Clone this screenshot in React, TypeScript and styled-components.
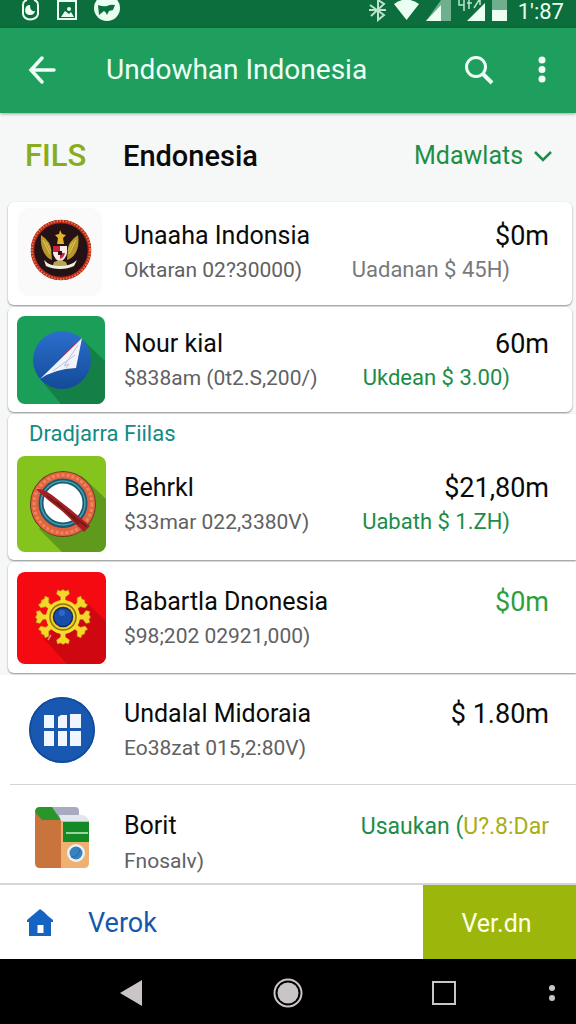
import React from "react";
import styled, { createGlobalStyle, css } from "styled-components";

const GlobalStyle = createGlobalStyle`
  *, *::before, *::after { box-sizing: border-box; }
  body { margin: 0; background: #f6f7f7; font-family: Roboto, "Liberation Sans", sans-serif; color: #0b0b0b; }
  button, select { font: inherit; color: inherit; background: none; border: 0; padding: 0; margin: 0; cursor: pointer; }
  h1, h2, h3, p, ul { margin: 0; padding: 0; font-weight: 400; }
  ul { list-style: none; }
  svg { display: block; flex: none; }
`;

const Screen = styled.div`
  display: flex;
  flex-direction: column;
  min-height: 100vh;
`;

const StatusBar = styled.div`
  display: flex;
  align-items: flex-start;
  justify-content: space-between;
  height: 28px;
  padding: 0 12px 0 20px;
  background: #0b6e3c;
  color: #eafff2;
`;

const StatusGroup = styled.div<{ $gap: number }>`
  display: flex;
  align-items: flex-start;
  gap: ${(p) => p.$gap}px;
`;

const Clock = styled.time`
  margin-left: 4px;
  font-size: 22px;
  line-height: 24px;
`;

const AppBar = styled.header`
  display: flex;
  align-items: center;
  height: 85px;
  padding: 0 16px 2px 24px;
  background: #1f9f5e;
  color: #f0fff6;
  box-shadow: 0 1px 3px rgba(0, 0, 0, 0.35);
`;

const AppTitle = styled.h1`
  flex: 1;
  margin-left: 46px;
  font-size: 28px;
  line-height: 36px;
  white-space: nowrap;
`;

const IconButton = styled.button`
  display: flex;
  align-items: center;
  justify-content: center;
  width: 36px;
  height: 48px;
`;

const BarActions = styled.div`
  display: flex;
  gap: 27px;
`;

const ListHeader = styled.div`
  display: flex;
  align-items: center;
  height: 89px;
  padding: 0 24px 4px 25px;
`;

const Tag = styled.span`
  width: 98px;
  font-size: 31px;
  line-height: 36px;
  font-weight: 500;
  color: #86ad1c;
`;

const Heading = styled.h2`
  flex: 1;
  font-size: 29px;
  line-height: 36px;
  font-weight: 500;
`;

const Picker = styled.label`
  display: flex;
  align-items: center;
  gap: 10px;
  color: #1c8f47;
`;

const PickerSelect = styled.select`
  appearance: none;
  font-size: 25px;
  line-height: 32px;
`;

const List = styled.ul`
  display: flex;
  flex: 1;
  flex-direction: column;
  gap: 2px;
`;

type CardKind = "card" | "edge" | "plain";

const Card = styled.li<{ $kind: CardKind }>`
  background: #fff;
  ${(p) =>
    p.$kind === "plain"
      ? css`
          padding-left: 8px;
          &:last-child {
            flex: 1;
            margin-top: -2px;
          }
        `
      : css`
          margin-left: 8px;
          margin-right: ${p.$kind === "card" ? "4px" : "0"};
          border-radius: ${p.$kind === "card" ? "6px" : "6px 0 0 6px"};
          box-shadow: 0 1px 2px rgba(0, 0, 0, 0.42);
        `}
`;

const GroupLabel = styled.h3`
  padding: 2px 0 2px 21px;
  font-size: 22px;
  line-height: 36px;
  color: #128a86;
`;

const Row = styled.div<{ $height: number; $kind: CardKind; $bottom?: number; $top?: boolean; $divider?: boolean }>`
  display: flex;
  align-items: ${(p) => (p.$top ? "flex-start" : "center")};
  gap: 18px;
  min-height: ${(p) => p.$height}px;
  margin-left: 2px;
  padding-top: ${(p) => (p.$top ? 22 : 0)}px;
  padding-right: ${(p) => (p.$kind === "card" ? 23 : 27)}px;
  padding-bottom: ${(p) => p.$bottom ?? 0}px;
  padding-left: 7px;
  border-bottom: ${(p) => (p.$divider ? "1px solid #d3d5d7" : "0")};
`;

const Details = styled.div`
  flex: 1;
  min-width: 0;
`;

const Line = styled.div<{ $small?: boolean }>`
  display: flex;
  justify-content: space-between;
  align-items: center;
  white-space: nowrap;
  font-size: ${(p) => (p.$small ? 21 : 25)}px;
  line-height: ${(p) => (p.$small ? 32 : 36)}px;
  color: ${(p) => (p.$small ? "#5f6163" : "#0b0b0b")};
  padding-right: ${(p) => (p.$small ? 39 : 0)}px;
`;

const Name = styled.h3`
  font-size: inherit;
`;

const Amount = styled.span<{ $tone?: string }>`
  color: ${(p) => p.$tone ?? "inherit"};
  font-size: 27px;
`;

const Note = styled.span<{ $tone: string; $large?: boolean }>`
  color: ${(p) => p.$tone};
  font-size: ${(p) => (p.$large ? 23 : 22)}px;
`;

const Accent = styled.span`
  color: #a9ae16;
`;

const ActionBar = styled.footer`
  display: flex;
  height: 76px;
  background: #fff;
  border-top: 2px solid #d5d6d8;
`;

const HomeAction = styled.button`
  display: flex;
  flex: 1;
  align-items: center;
  gap: 34px;
  padding: 2px 0 0 26px;
  font-size: 27px;
  color: #1259ae;
`;

const PrimaryAction = styled.button`
  width: 153px;
  padding: 2px 6px 0 0;
  font-size: 25px;
  background: #9db60b;
  color: #fbffe6;
`;

const SystemNav = styled.nav`
  display: grid;
  grid-template-columns: 1fr 27% 27% 27% 1fr;
  align-items: center;
  justify-items: center;
  height: 65px;
  padding-top: 2px;
  background: #000;
  color: #c9c5c6;
`;

const NavButton = styled.button<{ $column: number }>`
  grid-column: ${(p) => p.$column};
  grid-row: 1;
  display: flex;
  padding: 8px;
`;

const NavMenuButton = styled(NavButton)`
  justify-self: end;
  margin-right: 12px;
`;

const Garuda = () => (
  <svg width="89" height="88" viewBox="0 0 89 88" aria-hidden="true">
    <rect x="1" width="84" height="88" rx="12" fill="#fafafa" />
    <circle cx="44" cy="42" r="30" fill="#241214" />
    <circle cx="44" cy="42" r="28.500" fill="none" stroke="#b52a1e" strokeWidth="3.500" />
    <circle cx="44" cy="42" r="29" fill="none" stroke="#f0743c" strokeWidth="2" strokeDasharray="1.500 1.500" />
    <path d="M24 27c4 3 9 7 10 13l1 12c-8-3-12-13-11-25zM61 27c-4 3-9 7-10 13l-1 12c9-3 13-13 11-25z" fill="#b5982c" />
    <path d="M26 32l7 14M29 34l5 9M59 32l-7 14M56 34l-5 9" stroke="#e0c85c" strokeWidth="1" />
    <path d="M43 22l2 4 4 1-3 3 1 6h-7l1-6-3-3 4-1z" fill="#e2b32d" />
    <path d="M36 38h14v7q-1 6-7 9-6-3-7-9z" fill="#f8e9e9" />
    <path d="M36 38h7v6h-7zM43 45h5q-1 5-5 6z" fill="#c9253a" />
    <path d="M41 43h4v4h-4z" fill="#301016" />
    <path d="M37 54l6-2 6 2 2 6H35z" fill="#b8a553" />
    <path d="M27 52q5 6 16 6t17-6l-3 6q-6 3-14 3t-14-3z" fill="#f0efe2" />
  </svg>
);

const Compass = () => (
  <svg width="89" height="88" viewBox="0 0 89 88" aria-hidden="true">
    <defs>
      <linearGradient id="sea" x2="0" y2="1">
        <stop offset="0" stopColor="#2b6fcd" />
        <stop offset="1" stopColor="#144a98" />
      </linearGradient>
    </defs>
    <rect width="88" height="88" rx="8" fill="#1b9f58" />
    <path d="M65 23l23 22v35a8 8 0 0 1-8 8H44L23 63z" fill="#148048" />
    <circle cx="45" cy="44" r="29" fill="url(#sea)" />
    <path d="M65 22L23 63q14-10 36-11z" fill="#f2f4fa" />
    <path d="M65 22L51 34l-8 9z" fill="#cf2742" />
    <path d="M61 29L47 50l5-2-3 4M58 39L36 55" fill="none" stroke="#b9c3d8" strokeWidth="1" />
  </svg>
);

const Porthole = () => (
  <svg width="89" height="96" viewBox="0 0 89 96" aria-hidden="true">
    <rect width="89" height="96" rx="8" fill="#84c41c" />
    <path d="M68 23l21 20v45a8 8 0 0 1-8 8H45L22 73z" fill="#609a1d" />
    <circle cx="46" cy="48" r="33" fill="#6b3a2a" />
    <circle cx="46" cy="48" r="28" fill="none" stroke="#e0643f" strokeWidth="8" />
    <circle cx="46" cy="48" r="29" fill="none" stroke="#ee8560" strokeWidth="3" strokeDasharray="3 2" />
    <circle cx="46" cy="47" r="22" fill="#fff" stroke="#155c73" strokeWidth="5" />
    <circle cx="46" cy="47" r="22" fill="none" stroke="#4b9caf" strokeWidth="1.500" />
    <path d="M19 33q7-1 16 6l18 14 20 17-6 6-22-21-14-11z" fill="#a51e22" />
    <path d="M30 40l40 31M40 46l22 22" stroke="#6a191b" strokeWidth="1.500" />
  </svg>
);

const SunGear = () => (
  <svg width="89" height="92" viewBox="0 0 89 92" aria-hidden="true">
    <rect width="89" height="92" rx="8" fill="#f50a12" />
    <path d="M67 28l22 21v35a8 8 0 0 1-8 8H50L26 66z" fill="#cf0710" />
    <g transform="translate(46 45)">
      {[0, 52, 90, 128, 180, 232, 270, 308].map((angle) => (
        <path
          key={angle}
          d="M-2.500-15v-5l-4-3 1-4 3 1 2.500-1.500 2.500 1.500 3-1 1 4-4 3v5z"
          fill="#f5d72c"
          stroke="#b8860f"
          strokeWidth=".5"
          transform={`rotate(${angle})`}
        />
      ))}
      <circle r="17" fill="#f7dc2b" />
      <circle r="13" fill="#f2cf22" stroke="#8f6f1c" strokeWidth="1.500" />
      <circle r="9.500" fill="#184cab" stroke="#172c55" strokeWidth="1.500" />
      <circle cx="-1" cy="-4" r="3" fill="#2f67c8" />
    </g>
    <path d="M31 68l3-5" stroke="#ff8370" strokeWidth="1.500" />
  </svg>
);

const GridBadge = () => (
  <svg width="89" height="70" viewBox="0 0 89 70" aria-hidden="true">
    <circle cx="45" cy="35" r="33" fill="#1858b1" />
    <circle cx="45" cy="35" r="32" fill="none" stroke="#104a9d" strokeWidth="1.500" />
    <path d="M27 20h10v13H27zM41 22l3-2h6v13h-9zM53 19h11v14H53zM27 36h10v15H27zM41 36h9v15h-9zM53 36h11v15H53z" fill="#f0f6ff" />
  </svg>
);

const Carton = () => (
  <svg width="89" height="62" viewBox="0 -4 89 62" aria-hidden="true">
    <path d="M21-4h37q4 0 4 4v9l-19 2z" fill="#a8abc0" />
    <path d="M18 1l26 8v48H23q-5 0-5-5z" fill="#c9743c" />
    <path d="M18 1q0-5 5-5h12l9 13H25z" fill="#28962b" />
    <path d="M44 9h28v43q0 5-5 5H44z" fill="#eeb171" />
    <path d="M42 4h24q5 2 6 6H44z" fill="#e3e6ed" />
    <path d="M46 11h26v20H46z" fill="#138a25" />
    <path d="M49 22h22" stroke="#c8efc4" strokeWidth="1.500" />
    <circle cx="59" cy="42" r="9" fill="#edf2f6" />
    <circle cx="59" cy="42" r="6.500" fill="#3a82bd" />
    <path d="M54 46q7 1 9-8" fill="none" stroke="#2868a2" strokeWidth="1" />
  </svg>
);

interface Entry {
  icon: React.ReactNode;
  name: string;
  detail: string;
  amount: React.ReactNode;
  tone?: string;
  note?: string;
  noteTone?: string;
  height: number;
  bottom?: number;
  kind: CardKind;
  group?: string;
  top?: boolean;
  divider?: boolean;
}

const GREEN = "#1b8d49";

const entries: Entry[] = [
  { icon: <Garuda />, name: "Unaaha Indonsia", detail: "Oktaran 02?30000)", amount: "$0m", note: "Uadanan $ 45H)", noteTone: "#77797b", height: 103, bottom: 4, kind: "card" },
  { icon: <Compass />, name: "Nour kial", detail: "$838am (0t2.S,200/)", amount: "60m", note: "Ukdean $ 3.00)", noteTone: GREEN, height: 105, kind: "card" },
  { icon: <Porthole />, name: "Behrkl", detail: "$33mar 022,3380V)", amount: "$21,80m", note: "Uabath $ 1.ZH)", noteTone: GREEN, height: 106, bottom: 6, kind: "edge", group: "Dradjarra Fiilas" },
  { icon: <SunGear />, name: "Babartla Dnonesia", detail: "$98;202 02921,000)", amount: "$0m", tone: "#2f9f3c", height: 111, kind: "edge" },
  { icon: <GridBadge />, name: "Undalal Midoraia", detail: "Eo38zat 015,2:80V)", amount: "$ 1.80m", height: 110, kind: "plain", divider: true },
  { icon: <Carton />, name: "Borit", detail: "Fnosalv)", amount: <Note $large $tone={GREEN}>Usaukan (<Accent>U?.8:Dar</Accent></Note>, height: 92, kind: "plain", top: true },
];

const EntryCard = ({ entry }: { entry: Entry }) => (
  <Card $kind={entry.kind}>
    {entry.group && <GroupLabel>{entry.group}</GroupLabel>}
    <Row $height={entry.height} $kind={entry.kind} $bottom={entry.bottom} $top={entry.top} $divider={entry.divider}>
      {entry.icon}
      <Details>
        <Line>
          <Name>{entry.name}</Name>
          <Amount $tone={entry.tone}>{entry.amount}</Amount>
        </Line>
        <Line $small>
          <p>{entry.detail}</p>
          {entry.note && <Note $tone={entry.noteTone ?? GREEN}>{entry.note}</Note>}
        </Line>
      </Details>
    </Row>
  </Card>
);

export default function App() {
  return (
    <Screen>
      <GlobalStyle />
      <StatusBar>
        <StatusGroup $gap={16}>
          <svg width="21" height="22" viewBox="0 0 21 22" fill="none" stroke="currentColor" strokeWidth="2">
            <path d="M7 0q-4 1-4 5v9q1 5 7 5.500 7-.5 8-5.500V5q0-4-4-5" />
            <path d="M10 5a5 5 0 1 0 5 6q-5 1-5-6z" fill="currentColor" stroke="none" />
          </svg>
          <svg width="21" height="22" viewBox="0 0 21 22" fill="none" stroke="currentColor" strokeWidth="2">
            <path d="M1 0v19h18V1H1" />
            <path d="M4 17l4-6 4 3 2-2 3 5z" fill="currentColor" stroke="none" />
            <circle cx="12" cy="9" r="2" fill="currentColor" stroke="none" />
          </svg>
          <svg width="27" height="22" viewBox="0 0 27 22">
            <circle cx="13" cy="8" r="13" fill="currentColor" />
            <path d="M4 5q5 2 9 1 4-2 8-1l-2 5-4 1-2 4q-1-3-3-4l-5 4z" fill="#0b6e3c" />
          </svg>
        </StatusGroup>
        <StatusGroup $gap={7}>
          <svg width="18" height="22" viewBox="0 0 18 22" fill="none" stroke="currentColor" strokeWidth="2">
            <path d="M1 5l14 10-6 5V0l6 4L2 16M0 10h17" opacity=".8" />
          </svg>
          <svg width="25" height="22" viewBox="0 0 25 22">
            <path d="M0 4Q12-5 25 4L12.500 20z" fill="currentColor" />
          </svg>
          <svg width="25" height="22" viewBox="0 0 25 22">
            <path d="M15 0h10v21H0z" fill="currentColor" opacity=".45" />
            <path d="M0 21L15 5v16z" fill="currentColor" />
          </svg>
          <svg width="27" height="22" viewBox="0 0 27 22">
            <path d="M27 3v18H9z" fill="currentColor" />
            <path d="M1 0v5h5V0M6 5v6M11 0v9M16 8l5-8M22 0v5M9 3h5" fill="none" stroke="currentColor" strokeWidth="1.500" opacity=".8" />
          </svg>
          <svg width="15" height="22" viewBox="0 0 15 22">
            <path d="M0 0h15v10H0z" fill="currentColor" opacity=".45" />
            <path d="M0 10h15v11H0z" fill="currentColor" />
          </svg>
          <Clock>1':87</Clock>
        </StatusGroup>
      </StatusBar>

      <AppBar>
        <IconButton aria-label="Back">
          <svg width="30" height="30" viewBox="0 0 30 30" fill="none" stroke="currentColor" strokeWidth="3.500" strokeLinecap="round">
            <path d="M27 15H5M15 3L4 15l11 12" />
          </svg>
        </IconButton>
        <AppTitle>Undowhan Indonesia</AppTitle>
        <BarActions>
          <IconButton aria-label="Search">
            <svg width="30" height="30" viewBox="0 0 30 30" fill="none" stroke="currentColor" strokeWidth="3">
              <circle cx="12" cy="12" r="9.500" />
              <path d="M19 19l9 9" strokeWidth="4" />
            </svg>
          </IconButton>
          <IconButton aria-label="More options">
            <svg width="8" height="28" viewBox="0 0 8 28" fill="currentColor">
              <circle cx="4" cy="4" r="3.500" />
              <circle cx="4" cy="13.500" r="3.500" />
              <circle cx="4" cy="23" r="3.500" />
            </svg>
          </IconButton>
        </BarActions>
      </AppBar>

      <ListHeader>
        <Tag>FILS</Tag>
        <Heading>Endonesia</Heading>
        <Picker>
          <PickerSelect aria-label="Sort">
            <option>Mdawlats</option>
          </PickerSelect>
          <svg width="18" height="12" viewBox="0 0 18 12" fill="none" stroke="currentColor" strokeWidth="2.500">
            <path d="M1 2l8 8 8-8" />
          </svg>
        </Picker>
      </ListHeader>

      <List>
        {entries.map((entry) => (
          <EntryCard key={entry.name} entry={entry} />
        ))}
      </List>

      <ActionBar>
        <HomeAction>
          <svg width="28" height="30" viewBox="0 0 28 30">
            <path d="M14 1l4 3 4 4 5 4v2h-2v14H3V14H1v-2z" fill="#1763c2" />
            <path d="M11.500 17h6v8h-6z" fill="#fff" />
          </svg>
          Verok
        </HomeAction>
        <PrimaryAction>Ver.dn</PrimaryAction>
      </ActionBar>

      <SystemNav>
        <NavButton $column={2} aria-label="Back">
          <svg width="24" height="28" viewBox="0 0 24 28" fill="currentColor">
            <path d="M22 1v26L0 14z" />
          </svg>
        </NavButton>
        <NavButton $column={3} aria-label="Home">
          <svg width="30" height="30" viewBox="0 0 30 30" fill="currentColor">
            <circle cx="15" cy="15" r="13.500" fill="none" stroke="currentColor" strokeWidth="2" />
            <circle cx="15" cy="15" r="10.500" />
          </svg>
        </NavButton>
        <NavButton $column={4} aria-label="Recent apps">
          <svg width="26" height="26" viewBox="0 0 26 26" fill="none" stroke="currentColor" strokeWidth="2">
            <rect x="2" y="2" width="22" height="22" />
          </svg>
        </NavButton>
        <NavMenuButton $column={5} aria-label="Menu">
          <svg width="8" height="20" viewBox="0 0 8 20" fill="currentColor">
            <circle cx="4" cy="5" r="3" />
            <circle cx="4" cy="15" r="3" />
          </svg>
        </NavMenuButton>
      </SystemNav>
    </Screen>
  );
}
